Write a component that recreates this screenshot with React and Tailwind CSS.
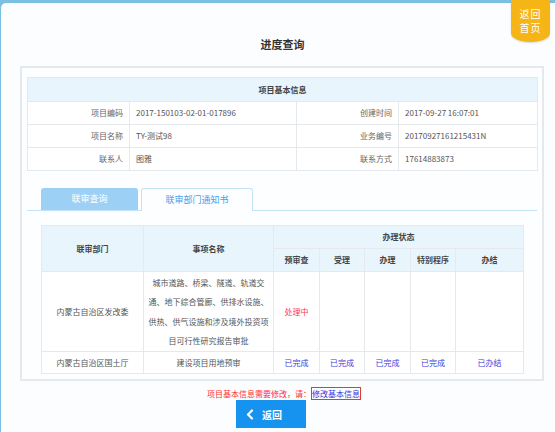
import React from "react";

const F = "font-['Noto_Sans_CJK_SC','Noto_Sans',sans-serif]";

function InfoTable() {
  const td = "border border-[#e5e9ee] p-0 text-[8px] leading-[10px]";
  const rows = [
    ["项目编码", "2017-150103-02-01-017896", "创建时间", "2017-09-27 16:07:01"],
    ["项目名称", "TY-测试98", "业务编号", "20170927161215431N"],
    ["联系人", "图雅", "联系方式", "17614883873"],
  ];
  return (
    <table className="w-[510px] table-fixed border-collapse bg-white">
      <colgroup>
        <col className="w-[102px]" />
        <col className="w-[167px]" />
        <col className="w-[102px]" />
        <col className="w-[139px]" />
      </colgroup>
      <tbody>
        <tr className="h-[24px]">
          <td colSpan={4} className={`${td} bg-[#e9f5fd] text-center font-bold text-[#444]`}>
            项目基本信息
          </td>
        </tr>
        {rows.map((r) => (
          <tr key={r[0]} className="h-[23px]">
            <td className={`${td} text-right pr-[6px] text-[#666]`}>{r[0]}</td>
            <td className={`${td} pl-[6px] text-[#555]`}>{r[1]}</td>
            <td className={`${td} text-right pr-[6px] text-[#666]`}>{r[2]}</td>
            <td className={`${td} pl-[6px] text-[#555]`}>{r[3]}</td>
          </tr>
        ))}
      </tbody>
    </table>
  );
}

function StatusTable() {
  const td = "border border-[#e5e9ee] p-0 text-[8px] leading-[10px] text-center";
  const th = `${td} bg-[#e9f5fd] font-bold text-[#444]`;
  const done = "text-[#3d3de0]";
  return (
    <table className="w-[482px] table-fixed border-collapse bg-white">
      <colgroup>
        <col className="w-[102px]" />
        <col className="w-[130px]" />
        <col className="w-[46px]" />
        <col className="w-[45px]" />
        <col className="w-[46px]" />
        <col className="w-[45px]" />
        <col className="w-[68px]" />
      </colgroup>
      <tbody>
        <tr className="h-[23px]">
          <td rowSpan={2} className={th}>联审部门</td>
          <td rowSpan={2} className={th}>事项名称</td>
          <td colSpan={5} className={th}>办理状态</td>
        </tr>
        <tr className="h-[23px]">
          <td className={th}>预审查</td>
          <td className={th}>受理</td>
          <td className={th}>办理</td>
          <td className={th}>特别程序</td>
          <td className={th}>办结</td>
        </tr>
        <tr className="h-[80px]">
          <td className={`${td} text-[#555]`}>内蒙古自治区发改委</td>
          <td className={`${td} text-[#555]`}>
            <div className="w-[121px] mx-auto leading-[19.5px]">
              城市道路、桥梁、隧道、轨道交通、地下综合管廊、供排水设施、供热、供气设施和涉及境外投资项目可行性研究报告审批
            </div>
          </td>
          <td className={`${td} text-[#ff3b3b]`}>处理中</td>
          <td className={td}></td>
          <td className={td}></td>
          <td className={td}></td>
          <td className={td}></td>
        </tr>
        <tr className="h-[22px]">
          <td className={`${td} text-[#555]`}>内蒙古自治区国土厅</td>
          <td className={`${td} text-[#555]`}>建设项目用地预审</td>
          <td className={`${td} ${done}`}>已完成</td>
          <td className={`${td} ${done}`}>已完成</td>
          <td className={`${td} ${done}`}>已完成</td>
          <td className={`${td} ${done}`}>已完成</td>
          <td className={`${td} ${done}`}>已办结</td>
        </tr>
      </tbody>
    </table>
  );
}

export default function App() {
  return (
    <div className={`w-[555px] h-[432px] bg-[#7bbfe1] pt-[3px] pl-[1px] overflow-hidden ${F}`}>
      <div className="relative h-full bg-[#fbfdff] rounded-tl-[5px]">
        <div className="absolute right-[5px] top-[-3px] w-[39px] h-[42px] bg-[#f6b516] rounded-bl-[19px_9px] rounded-br-[19px_9px] flex flex-col items-center pt-[7px] text-white text-[10px] leading-[14px] tracking-[1px] shadow-[0_1px_2px_rgba(0,0,0,0.15)]">
          <span>返回</span>
          <span>首页</span>
        </div>

        <div className="pt-[34px] w-[563px] text-center text-[11px] leading-[14px] font-bold text-[#333]">
          进度查询
        </div>

        <div className="mt-[15px] ml-[19px] w-[524px] border-2 border-[#e6e9ec] bg-[#fdfeff] pt-[9px] px-[5px] pb-[5px]">
          <InfoTable />

          <div className="mt-[17px] flex items-end gap-[3px] pl-[14px] border-b border-[#c3e2f7] h-[23px]">
            <div className="w-[97px] h-[22px] bg-[#9dd0f5] rounded-t-[3px] flex items-center justify-center text-white text-[9px]">
              联审查询
            </div>
            <div className="w-[112px] h-[23px] mb-[-1px] bg-[#fdfeff] border border-b-0 border-[#c3e2f7] rounded-t-[3px] flex items-center justify-center text-[#4aa0e8] text-[9px]">
              联审部门通知书
            </div>
          </div>

          <div className="mt-[14px] ml-[14px]">
            <StatusTable />
          </div>
        </div>

        <div className="mt-[6px] flex justify-center w-[566px] items-center text-[8px] leading-[12px]">
          <span className="text-[#ff3030]">项目基本信息需要修改，请：</span>
          <span className="border border-[#e53935] text-[#3535d8] leading-[11px]">修改基本信息</span>
        </div>

        <div className="ml-[235px] mt-[0px] w-[70px] h-[28px] bg-[#1693ee] flex items-center gap-[8px] pl-[10px] text-white text-[10px] font-bold">
          <svg width="8" height="11" viewBox="0 0 8 11">
            <polyline points="6,1.5 2,5.5 6,9.5" fill="none" stroke="white" strokeWidth="2.2" strokeLinecap="round" strokeLinejoin="round" />
          </svg>
          <span>返回</span>
        </div>
      </div>
    </div>
  );
}
